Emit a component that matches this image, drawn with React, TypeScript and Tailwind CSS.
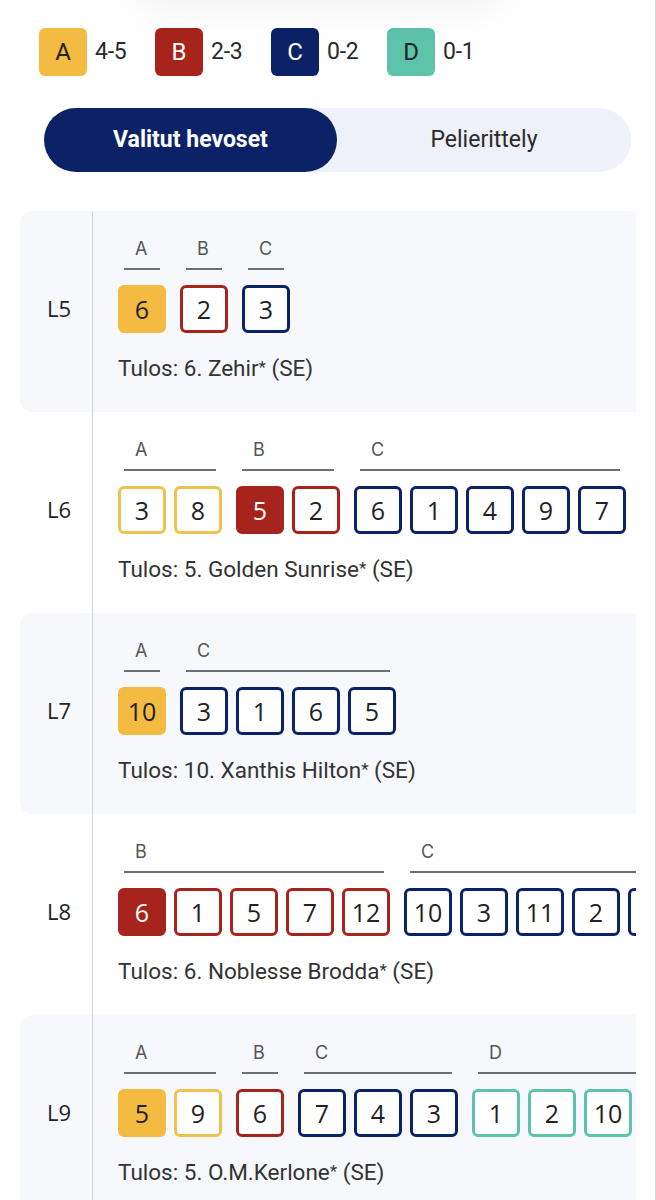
import React from "react";

type Cat = "A" | "B" | "C" | "D";
type Horse = { n: number | null; filled?: boolean };
type Group = { cat: Cat; horses: Horse[] };
type Race = { label: string; groups: Group[]; result: string; shaded: boolean };

const filledCls: Record<Cat, string> = {
  A: "bg-[#f4bb42] border-[#f4bb42] text-[#222]",
  B: "bg-[#a7241c] border-[#a7241c] text-white",
  C: "bg-[#0b2366] border-[#0b2366] text-white",
  D: "bg-[#5dc3a9] border-[#5dc3a9] text-[#222]",
};
const outlineCls: Record<Cat, string> = {
  A: "bg-white border-[#f1c150] text-[#222]",
  B: "bg-white border-[#a7241c] text-[#222]",
  C: "bg-white border-[#0b2366] text-[#222]",
  D: "bg-white border-[#5dc3a9] text-[#222]",
};

const races: Race[] = [
  {
    label: "L5",
    shaded: true,
    result: "Tulos: 6. Zehir",
    groups: [
      { cat: "A", horses: [{ n: 6, filled: true }] },
      { cat: "B", horses: [{ n: 2 }] },
      { cat: "C", horses: [{ n: 3 }] },
    ],
  },
  {
    label: "L6",
    shaded: false,
    result: "Tulos: 5. Golden Sunrise",
    groups: [
      { cat: "A", horses: [{ n: 3 }, { n: 8 }] },
      { cat: "B", horses: [{ n: 5, filled: true }, { n: 2 }] },
      { cat: "C", horses: [{ n: 6 }, { n: 1 }, { n: 4 }, { n: 9 }, { n: 7 }] },
    ],
  },
  {
    label: "L7",
    shaded: true,
    result: "Tulos: 10. Xanthis Hilton",
    groups: [
      { cat: "A", horses: [{ n: 10, filled: true }] },
      { cat: "C", horses: [{ n: 3 }, { n: 1 }, { n: 6 }, { n: 5 }] },
    ],
  },
  {
    label: "L8",
    shaded: false,
    result: "Tulos: 6. Noblesse Brodda",
    groups: [
      { cat: "B", horses: [{ n: 6, filled: true }, { n: 1 }, { n: 5 }, { n: 7 }, { n: 12 }] },
      { cat: "C", horses: [{ n: 10 }, { n: 3 }, { n: 11 }, { n: 2 }, { n: null }, { n: null }] },
    ],
  },
  {
    label: "L9",
    shaded: true,
    result: "Tulos: 5. O.M.Kerlone",
    groups: [
      { cat: "A", horses: [{ n: 5, filled: true }, { n: 9 }] },
      { cat: "B", horses: [{ n: 6 }] },
      { cat: "C", horses: [{ n: 7 }, { n: 4 }, { n: 3 }] },
      { cat: "D", horses: [{ n: 1 }, { n: 2 }, { n: 10 }, { n: null }] },
    ],
  },
];

const legend: { cat: Cat; range: string }[] = [
  { cat: "A", range: "4-5" },
  { cat: "B", range: "2-3" },
  { cat: "C", range: "0-2" },
  { cat: "D", range: "0-1" },
];

function HorseBox({ cat, h }: { cat: Cat; h: Horse }) {
  return (
    <div
      className={`w-[48px] h-[48px] shrink-0 rounded-[6px] border-[3px] flex items-center justify-center text-[25px] leading-none font-['Open_Sans',sans-serif] ${
        h.filled ? filledCls[cat] : outlineCls[cat]
      }`}
    >
      {h.n}
    </div>
  );
}

function RaceRow({ race }: { race: Race }) {
  return (
    <div
      className={`flex h-[201px] w-[616px] overflow-hidden rounded-l-[12px] ${
        race.shaded ? "bg-[#f6f8fb]" : "bg-white"
      }`}
    >
      <div className="w-[73px] shrink-0 border-r border-[#cfd3da] flex justify-center pt-[83px]">
        <span className="text-[22px] leading-[28px] font-medium text-[#222] font-['Open_Sans',sans-serif] pl-[6px]">
          {race.label}
        </span>
      </div>
      <div className="flex flex-col pl-[25px] pt-[27px] min-w-0">
        <div className="flex gap-[14px]">
          {race.groups.map((g, i) => (
            <div key={i} className="flex flex-col shrink-0">
              <div className="mx-[6px] border-b-2 border-[#6b6f76] pl-[11px] pb-[8px] text-[18px] leading-[22px] text-[#555] font-['Inter',sans-serif]">
                {g.cat}
              </div>
              <div className="flex gap-[8px] mt-[15px]">
                {g.horses.map((h, j) => (
                  <HorseBox key={j} cat={g.cat} h={h} />
                ))}
              </div>
            </div>
          ))}
        </div>
        <div className="mt-[21px] text-[22.5px] leading-[28px] text-[#333] font-['Roboto',sans-serif] whitespace-nowrap">
          {race.result}
          <span className="text-[17px] relative top-[-3px]">*</span> (SE)
        </div>
      </div>
    </div>
  );
}

export default function App() {
  return (
    <div className="relative w-[656px] h-[1200px] overflow-hidden bg-white border-r border-[#d6d6d6] font-['Roboto',sans-serif]">
      <div className="absolute left-[140px] top-[-60px] w-[360px] h-[60px] rounded-full shadow-[0_0_40px_14px_rgba(0,0,0,0.05)]" />
      <div className="flex items-center pt-[28px] pl-[39px]">
        {legend.map((l) => (
          <div key={l.cat} className="w-[116px] flex items-center gap-[8px]">
            <div
              className={`w-[48px] h-[48px] rounded-[6px] flex items-center justify-center text-[24px] font-['Roboto',sans-serif] ${filledCls[l.cat]}`}
            >
              {l.cat}
            </div>
            <span className="text-[23px] text-[#2a2a2a] tracking-[-0.3px]">{l.range}</span>
          </div>
        ))}
      </div>
      <div className="ml-[44px] mt-[32px] w-[587px] h-[64px] rounded-full bg-[#eef1f7] flex">
        <div className="w-[293px] h-full rounded-full bg-[#0b2366] flex items-center justify-center text-white text-[23px] font-bold">
          Valitut hevoset
        </div>
        <div className="flex-1 flex items-center justify-center text-[23px] text-[#2a2a2a]">
          Pelierittely
        </div>
      </div>
      <div className="ml-[20px] mt-[39px] flex flex-col">
        {races.map((r) => (
          <RaceRow key={r.label} race={r} />
        ))}
      </div>
    </div>
  );
}
